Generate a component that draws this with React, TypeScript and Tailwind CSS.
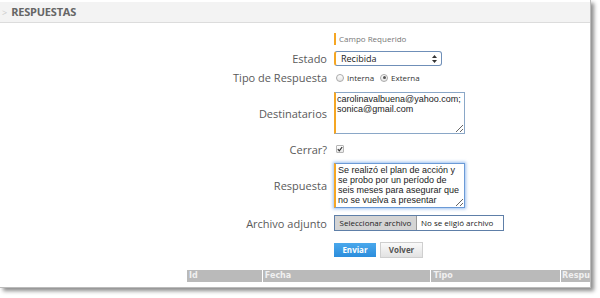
import { useState } from 'react'

function Label({ children, className = '' }: { children: React.ReactNode; className?: string }) {
  return (
    <div className={`w-[327px] shrink-0 text-right text-[11px] leading-[15px] text-[#5a5a5a] ${className}`}>{children}</div>
  )
}

export default function App() {
  const [tipo, setTipo] = useState('externa')
  const [cerrar, setCerrar] = useState(true)
  const [destinatarios, setDestinatarios] = useState('carolinavalbuena@yahoo.com;\nsonica@gmail.com')
  const [respuesta, setRespuesta] = useState(
    'Se realizó el plan de acción y se probo por un período de seis meses para asegurar que no se vuelva a presentar'
  )

  const font = { fontFamily: '"Open Sans", "DejaVu Sans", sans-serif' }
  const areaFont = { fontFamily: '"Liberation Sans", Arial, sans-serif' }

  return (
    <div className="w-[600px] h-[298px] bg-white overflow-hidden" style={font}>
      <div className="w-[591px] h-[288px] bg-white border-r border-b border-[#bbb] shadow-[3px_3px_4px_rgba(0,0,0,0.45)] flex flex-col">
        {/* header */}
        <div className="mt-[2px] h-[21px] bg-[#f3f3f3] border-b border-[#dcdcdc] flex items-center">
          <span className="text-[9px] text-[#ccc] pl-[2px] pr-[4px] leading-none">&gt;</span>
          <span className="text-[11px] font-bold text-[#666] tracking-[-0.2px]">RESPUESTAS</span>
        </div>

        {/* form */}
        <div className="flex flex-col">
          <div className="flex mt-[10px] h-[12px] items-center">
            <div className="w-[334px] shrink-0" />
            <div className="w-[2px] h-[12px] bg-[#f5a623]" />
            <span className="ml-[3px] text-[8px] text-[#777]">Campo Requerido</span>
          </div>

          <div className="flex items-center gap-[7px] mt-[6px] h-[15px]">
            <Label>Estado</Label>
            <div className="relative w-[108px] h-[15px] rounded-[3px] border border-[#6f8fb8] border-l-[2px] border-l-[#f5a623] bg-white flex items-center">
              <span className="pl-[5px] text-[9px] text-[#222]">Recibida</span>
              <svg className="absolute right-[4px] top-[3px]" width="5" height="8" viewBox="0 0 5 8">
                <path d="M2.5 0 L5 3 L0 3 Z" fill="#333" />
                <path d="M2.5 8 L5 5 L0 5 Z" fill="#333" />
              </svg>
            </div>
          </div>

          <div className="flex items-center gap-[7px] mt-[5px] h-[13px]">
            <Label>Tipo de Respuesta</Label>
            <div className="flex items-center text-[8px] text-[#333]">
              <button
                onClick={() => setTipo('interna')}
                className="ml-[2px] w-[8px] h-[8px] rounded-full border border-[#aaa] bg-gradient-to-b from-white to-[#e5e5e5] flex items-center justify-center"
              >
                {tipo === 'interna' && <span className="w-[3px] h-[3px] rounded-full bg-[#555]" />}
              </button>
              <span className="ml-[3px]">Interna</span>
              <button
                onClick={() => setTipo('externa')}
                className="ml-[6px] w-[8px] h-[8px] rounded-full border border-[#aaa] bg-gradient-to-b from-white to-[#e5e5e5] flex items-center justify-center"
              >
                {tipo === 'externa' && <span className="w-[3px] h-[3px] rounded-full bg-[#555]" />}
              </button>
              <span className="ml-[3px]">Externa</span>
            </div>
          </div>

          <div className="flex items-center gap-[7px] mt-[8px] h-[42px]">
            <Label>Destinatarios</Label>
            <textarea
              value={destinatarios}
              onChange={(e) => setDestinatarios(e.target.value)}
              className="block w-[131px] h-[42px] border border-[#8aa7c7] border-l-[2px] border-l-[#f5a623] px-[1px] py-[1px] text-[9px] leading-[10px] text-[#222] resize-y outline-none overflow-hidden"
              style={areaFont}
            />
          </div>

          <div className="flex items-center gap-[7px] mt-[9px] h-[12px]">
            <Label>Cerrar?</Label>
            <button
              onClick={() => setCerrar(!cerrar)}
              className="ml-[2px] w-[8px] h-[8px] rounded-[1px] border border-[#b5b5b5] bg-gradient-to-b from-white to-[#e8e8e8] flex items-center justify-center"
            >
              {cerrar && (
                <svg width="6" height="6" viewBox="0 0 6 6">
                  <path d="M0.8 3.2 L2.3 4.8 L5.2 1" stroke="#333" strokeWidth="1.2" fill="none" />
                </svg>
              )}
            </button>
          </div>

          <div className="flex items-center gap-[7px] mt-[8px] h-[45px]">
            <Label>Respuesta</Label>
            <textarea
              value={respuesta}
              onChange={(e) => setRespuesta(e.target.value)}
              className="block w-[131px] h-[45px] border border-[#6b9ad6] border-l-[2px] border-l-[#f5a623] shadow-[0_0_3px_1px_rgba(90,150,230,0.6)] px-[2px] py-[1px] text-[9px] leading-[10px] text-[#222] resize-y outline-none overflow-hidden"
              style={areaFont}
            />
          </div>

          <div className="flex items-center gap-[7px] mt-[7px] h-[16px]">
            <Label>Archivo adjunto</Label>
            <div className="w-[170px] h-[16px] border border-[#5e7fa8] bg-white flex items-center text-[8px]">
              <div className="h-full w-[82px] bg-[#d4d4d4] border-r border-[#999] flex items-center justify-center text-[#222]">
                Seleccionar archivo
              </div>
              <span className="ml-[4px] text-[#222]">No se eligió archivo</span>
            </div>
          </div>

          <div className="flex items-center mt-[11px] h-[16px]">
            <div className="w-[334px] shrink-0" />
            <button className="w-[42px] h-[14px] bg-gradient-to-b from-[#4aa8ec] to-[#2b8ddc] text-white text-[8px] font-bold">
              Enviar
            </button>
            <button className="ml-[4px] w-[43px] h-[16px] bg-gradient-to-b from-[#fafafa] to-[#e2e2e2] border border-[#cfcfcf] text-[#555] text-[8px] font-bold">
              Volver
            </button>
          </div>

          <div
            className="flex mt-[12px] ml-[187px] h-[12px] bg-white gap-[1px] text-[8px] font-bold text-[#f0f0f0]"
            style={{ fontFamily: '"DejaVu Sans", Verdana, sans-serif' }}
          >
            <div className="w-[75px] bg-[#bababa] pl-[2px] flex items-center">Id</div>
            <div className="w-[168px] bg-[#bababa] pl-[2px] flex items-center">Fecha</div>
            <div className="w-[129px] bg-[#bababa] pl-[2px] flex items-center">Tipo</div>
            <div className="w-[29px] bg-[#bababa] pl-[1px] flex items-center overflow-hidden whitespace-nowrap">Respue</div>
          </div>
        </div>
      </div>
    </div>
  )
}
